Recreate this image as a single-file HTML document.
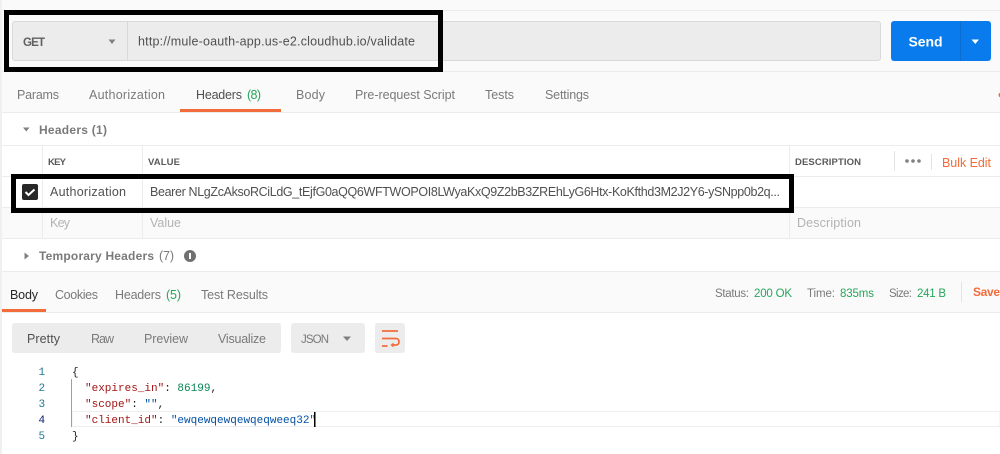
<!DOCTYPE html>
<html><head><meta charset="utf-8"><style>
html,body{margin:0;padding:0;background:#fff;width:1000px;height:454px;overflow:hidden}
svg{display:block}
text{font-family:"Liberation Sans",sans-serif;font-size:12.5px;fill:#7a7a7a}
.m{font-family:"Liberation Mono",monospace;font-size:11px}
.g{fill:#26a65b}.d{fill:#505050}.o{fill:#f26b3a}.p{fill:#b3b3b3}.b{font-weight:bold}.h{font-size:9.5px;font-weight:bold;fill:#5a5a5a}.s{font-size:11.5px}
</style></head><body>
<svg width="1000" height="454" viewBox="0 0 1000 454" xmlns="http://www.w3.org/2000/svg">
<rect width="1000" height="454" fill="#fff"/>
<rect width="1000" height="112" fill="#fafafa"/>
<rect x="0" y="10" width="1000" height="1" fill="#ececec"/>
<rect x="0" y="71" width="1000" height="1" fill="#ececec"/>
<rect x="0" y="112" width="1000" height="1" fill="#ececec"/>
<!-- url bar -->
<rect x="12.500" y="21.500" width="868" height="39" rx="2.500" fill="#ececec" stroke="#d9d9d9"/>
<rect x="127" y="22" width="1" height="38" fill="#d9d9d9"/>
<text x="23" y="46" textLength="22" class="d" style="font-size:11.500px;font-weight:bold;fill:#606060">GET</text>
<path d="M108.500 39.500h7l-3.500 4.500z" fill="#808080"/>
<text x="138" y="45.500" textLength="277" class="d">http://mule-oauth-app.us-e2.cloudhub.io/validate</text>
<!-- send -->
<rect x="891" y="21" width="100" height="40" rx="3" fill="#097bed"/>
<rect x="960" y="21" width="1" height="40" fill="#0a6ed1"/>
<text x="908.500" y="46.500" textLength="34" class="b" style="fill:#fff;font-size:14px">Send</text>
<path d="M971.500 39.500h7.500l-3.750 4.500z" fill="#fff"/>
<!-- tabs -->
<text x="17" y="99" textLength="42">Params</text>
<text x="89" y="99" textLength="76">Authorization</text>
<text x="196" y="99" textLength="46" class="d">Headers</text>
<text x="247" y="99" textLength="14" class="g">(8)</text>
<text x="296" y="99" textLength="29">Body</text>
<text x="355" y="99" textLength="100">Pre-request Script</text>
<text x="485" y="99" textLength="29">Tests</text>
<text x="545" y="99" textLength="44">Settings</text>
<rect x="180" y="109" width="101" height="3" fill="#f26b3a"/>
<circle cx="1001" cy="95" r="2.500" fill="#f26b3a"/>
<!-- headers section -->
<path d="M23 127.500h6.500l-3.250 4z" fill="#808080"/>
<text x="39" y="134" textLength="68" class="b" style="font-size:12px">Headers (1)</text>
<rect x="0" y="145" width="1000" height="1" fill="#ececec"/>
<rect x="0" y="176" width="1000" height="1" fill="#ececec"/>
<rect x="0" y="208" width="1000" height="30" fill="#fafafa"/>
<rect x="0" y="207" width="1000" height="1" fill="#ececec"/>
<rect x="0" y="238" width="1000" height="1" fill="#ececec"/>
<rect x="42" y="146" width="1" height="92" fill="#ececec"/>
<rect x="142" y="146" width="1" height="92" fill="#ececec"/>
<rect x="789" y="146" width="1" height="92" fill="#ececec"/>
<text x="48" y="165" textLength="18" class="h">KEY</text>
<text x="148" y="165" textLength="32" class="h">VALUE</text>
<text x="795" y="165" textLength="66" class="h">DESCRIPTION</text>
<rect x="894" y="151" width="1" height="20" fill="#e4e4e4"/>
<rect x="931" y="154" width="1" height="16" fill="#e4e4e4"/>
<circle cx="907" cy="161" r="1.800" fill="#808080"/><circle cx="913" cy="161" r="1.800" fill="#808080"/><circle cx="919" cy="161" r="1.800" fill="#808080"/>
<text x="942" y="167" textLength="49" class="o">Bulk Edit</text>
<rect x="22" y="184" width="16" height="16" rx="2" fill="#282828"/>
<path d="M25.500 192l3 3 6-5.500" fill="none" stroke="#fff" stroke-width="2"/>
<text x="50" y="196" textLength="76" class="d">Authorization</text>
<text x="150" y="196" textLength="630" class="d">Bearer NLgZcAksoRCiLdG_tEjfG0aQQ6WFTWOPOI8LWyaKxQ9Z2bB3ZREhLyG6Htx-KoKfthd3M2J2Y6-ySNpp0b2q...</text>
<text x="50" y="227" textLength="20" class="p">Key</text>
<text x="150" y="227" textLength="31" class="p">Value</text>
<text x="797" y="227" textLength="64" class="p">Description</text>
<!-- temp headers -->
<path d="M24.500 252.500v7l4.500-3.500z" fill="#808080"/>
<text x="39" y="260" textLength="115" class="b" style="font-size:12px">Temporary Headers</text>
<text x="159" y="260" textLength="15">(7)</text>
<circle cx="190" cy="256" r="6" fill="#707070"/>
<rect x="189" y="253" width="2" height="6" fill="#fff"/>
<rect x="0" y="271" width="1000" height="1" fill="#ececec"/>
<!-- response tabs -->
<rect x="0" y="272" width="1000" height="40" fill="#fafafa"/>
<rect x="0" y="312" width="1000" height="1" fill="#ececec"/>
<text x="10" y="299" textLength="28" style="fill:#282828">Body</text>
<text x="55" y="299" textLength="43">Cookies</text>
<text x="115" y="299" textLength="46">Headers</text>
<text x="166" y="299" textLength="15" class="g">(5)</text>
<text x="201" y="299" textLength="67">Test Results</text>
<rect x="2" y="309" width="44" height="3" fill="#f26b3a"/>
<text x="715" y="297" textLength="34" class="s">Status:</text>
<text x="754" y="297" textLength="38" class="s g">200 OK</text>
<text x="807" y="297" textLength="28" class="s">Time:</text>
<text x="840" y="297" textLength="34" class="s g">835ms</text>
<text x="889" y="297" textLength="23" class="s">Size:</text>
<text x="917" y="297" textLength="29" class="s g">241 B</text>
<rect x="961" y="282" width="1" height="20" fill="#e4e4e4"/>
<text x="973" y="296" textLength="27" class="o b" style="font-size:12px">Save</text>
<!-- toolbar -->
<rect x="12" y="323" width="269" height="30" rx="3" fill="#ececec"/>
<rect x="291" y="323" width="74" height="30" rx="3" fill="#ececec"/>
<rect x="375" y="323" width="30" height="30" rx="3" fill="#ececec"/>
<text x="27" y="343" textLength="33" class="d">Pretty</text>
<text x="91" y="343" textLength="23">Raw</text>
<text x="144" y="343" textLength="44">Preview</text>
<text x="218" y="343" textLength="48">Visualize</text>
<text x="301" y="343" textLength="28" style="font-size:11.500px">JSON</text>
<path d="M343 336.500h8l-4 4.500z" fill="#808080"/>
<path d="M382 331h16M382 338.500h14c4 0 4 6.500 0 6.500h-4M382 346h5.500" fill="none" stroke="#f26b3a" stroke-width="1.700"/>
<path d="M393.500 342.500l-3 2.500 3 2.500z" fill="#f26b3a"/>
<!-- code -->
<rect x="72" y="411.500" width="928" height="15" fill="#fff" stroke="#eeeeee"/>
<rect x="71" y="379" width="1" height="48" fill="#a0a0a0"/>
<g class="nums">
<text x="38.500" y="375" class="m" style="fill:#237893">1</text>
<text x="38.500" y="391" class="m" style="fill:#237893">2</text>
<text x="38.500" y="407" class="m" style="fill:#237893">3</text>
<text x="38.500" y="423" class="m" style="fill:#0b216f">4</text>
<text x="38.500" y="439" class="m" style="fill:#237893">5</text>
</g>
<text x="72" y="375" class="m" style="fill:#222">{</text>
<text x="85" y="391" class="m" xml:space="preserve"><tspan style="fill:#a31515">"expires_in"</tspan><tspan style="fill:#222">: </tspan><tspan style="fill:#098658">86199</tspan><tspan style="fill:#222">,</tspan></text>
<text x="85" y="407" class="m" xml:space="preserve"><tspan style="fill:#a31515">"scope"</tspan><tspan style="fill:#222">: </tspan><tspan style="fill:#0451a5">""</tspan><tspan style="fill:#222">,</tspan></text>
<text x="85" y="423" class="m" xml:space="preserve"><tspan style="fill:#a31515">"client_id"</tspan><tspan style="fill:#222">: </tspan><tspan style="fill:#0451a5">"ewqewqewqewqeqweeq32"</tspan></text>
<text x="72" y="439" class="m" style="fill:#222">}</text>
<rect x="314" y="412" width="1.500" height="15" fill="#000"/>
<!-- left strip -->
<rect x="0" y="0" width="2" height="454" fill="#f0f0f0"/>
<!-- black annotation boxes -->
<rect x="6.500" y="12.500" width="434" height="57" fill="none" stroke="#000" stroke-width="5"/>
<rect x="13.500" y="176.500" width="778" height="34" fill="none" stroke="#000" stroke-width="5"/>
</svg>
</body></html>
